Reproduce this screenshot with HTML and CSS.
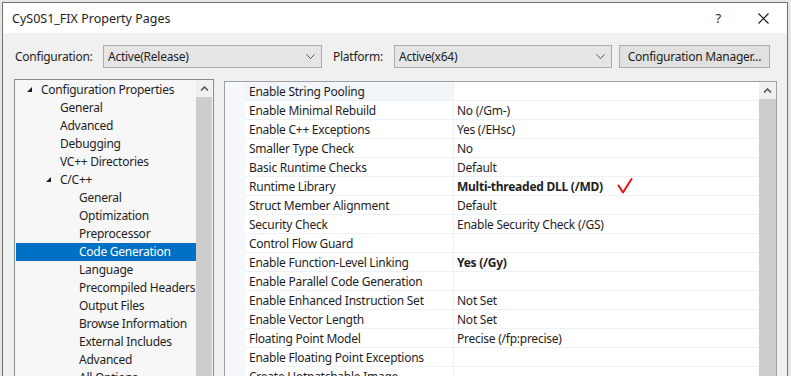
FILE: index.html
```html
<!DOCTYPE html>
<html lang="en">
<head>
    <meta charset="UTF-8">
    <title>CyS0S1_FIX Property Pages</title>
    <link rel="stylesheet" href="styles.css">
</head>
<body>
    <div class="window">
        <!-- Title bar -->
        <div class="titlebar">
            <span class="title">CyS0S1_FIX Property Pages</span>
            <span class="help">?</span>
            <svg class="close" width="11" height="11" viewBox="0 0 11 11"><path d="M0.5 0.5L10.5 10.5M10.5 0.5L0.5 10.5" stroke="#111" stroke-width="1.1" fill="none"/></svg>
        </div>

        <div class="content">
            <!-- Configuration / platform selectors -->
            <div class="toolbar">
                <label class="lbl-config">Configuration:</label>
                <div class="combo combo-config">
                    <span>Active(Release)</span>
                    <svg width="9" height="5" viewBox="0 0 9 5"><path d="M0.5 0.5L4.5 4.5L8.5 0.5" stroke="#555" fill="none"/></svg>
                </div>
                <label class="lbl-platform">Platform:</label>
                <div class="combo combo-platform">
                    <span>Active(x64)</span>
                    <svg width="9" height="5" viewBox="0 0 9 5"><path d="M0.5 0.5L4.5 4.5L8.5 0.5" stroke="#555" fill="none"/></svg>
                </div>
                <button class="btn">Configuration Manager...</button>
            </div>

            <div class="panes">
                <!-- Left: tree -->
                <div class="tree">
                    <div class="tree-list">
                        <div class="node lvl0"><i class="tri"></i>Configuration Properties</div>
                        <div class="node lvl1">General</div>
                        <div class="node lvl1">Advanced</div>
                        <div class="node lvl1">Debugging</div>
                        <div class="node lvl1">VC++ Directories</div>
                        <div class="node lvl1 open"><i class="tri"></i>C/C++</div>
                        <div class="node lvl2">General</div>
                        <div class="node lvl2">Optimization</div>
                        <div class="node lvl2">Preprocessor</div>
                        <div class="node lvl2 selected">Code Generation</div>
                        <div class="node lvl2">Language</div>
                        <div class="node lvl2">Precompiled Headers</div>
                        <div class="node lvl2">Output Files</div>
                        <div class="node lvl2">Browse Information</div>
                        <div class="node lvl2">External Includes</div>
                        <div class="node lvl2">Advanced</div>
                        <div class="node lvl2">All Options</div>
                    </div>
                    <div class="vscroll">
                        <div class="arrow"><svg width="9" height="5" viewBox="0 0 9 5"><path d="M1 4.5L4.5 1L8 4.5" stroke="#555" stroke-width="1.6" fill="none"/></svg></div>
                        <div class="thumb"></div>
                    </div>
                </div>

                <!-- Right: property grid -->
                <div class="grid">
                    <div class="gutter"></div>
                    <div class="rows">
                        <div class="row current"><div class="name">Enable String Pooling</div><div class="value"></div></div>
                        <div class="row"><div class="name">Enable Minimal Rebuild</div><div class="value">No (/Gm-)</div></div>
                        <div class="row"><div class="name">Enable C++ Exceptions</div><div class="value">Yes (/EHsc)</div></div>
                        <div class="row"><div class="name">Smaller Type Check</div><div class="value">No</div></div>
                        <div class="row"><div class="name">Basic Runtime Checks</div><div class="value">Default</div></div>
                        <div class="row"><div class="name">Runtime Library</div><div class="value"><b>Multi-threaded DLL (/MD)</b><svg class="check" width="16" height="16" viewBox="0 0 16 16"><path d="M1.5 7.5L6 14.5L14.5 1" stroke="#ee1111" stroke-width="2" fill="none" stroke-linecap="round" stroke-linejoin="round"/></svg></div></div>
                        <div class="row"><div class="name">Struct Member Alignment</div><div class="value">Default</div></div>
                        <div class="row"><div class="name">Security Check</div><div class="value">Enable Security Check (/GS)</div></div>
                        <div class="row"><div class="name">Control Flow Guard</div><div class="value"></div></div>
                        <div class="row"><div class="name">Enable Function-Level Linking</div><div class="value"><b>Yes (/Gy)</b></div></div>
                        <div class="row"><div class="name">Enable Parallel Code Generation</div><div class="value"></div></div>
                        <div class="row"><div class="name">Enable Enhanced Instruction Set</div><div class="value">Not Set</div></div>
                        <div class="row"><div class="name">Enable Vector Length</div><div class="value">Not Set</div></div>
                        <div class="row"><div class="name">Floating Point Model</div><div class="value">Precise (/fp:precise)</div></div>
                        <div class="row"><div class="name">Enable Floating Point Exceptions</div><div class="value"></div></div>
                        <div class="row"><div class="name">Create Hotpatchable Image</div><div class="value"></div></div>
                    </div>
                    <div class="vscroll">
                        <div class="arrow"><svg width="9" height="5" viewBox="0 0 9 5"><path d="M1 4.5L4.5 1L8 4.5" stroke="#555" stroke-width="1.6" fill="none"/></svg></div>
                        <div class="thumb"></div>
                    </div>
                </div>
            </div>
        </div>
    </div>
</body>
</html>
```

FILE: styles.css
```css
body {
    margin: 0;
    padding: 2px 0 0 2px;
    background-color: #e6e6e6;
    font-family: 'Noto Sans', 'Open Sans', sans-serif;
    font-size: 12px;
    letter-spacing: -0.25px;
    color: #1e1e1e;
    height: 376px;
    overflow: hidden;
    box-sizing: border-box;
}
.window {
    width: 786px;
    height: 400px;
    border: 1px solid #707070;
    box-sizing: border-box;
    background-color: #f0f0f0;
    display: flex;
    flex-direction: column;
}
.titlebar {
    height: 30px;
    background: #fff;
    display: flex;
    align-items: center;
    padding-left: 9px;
    flex-shrink: 0;
}
.title {
    font-size: 12.5px;
    letter-spacing: 0;
    flex: 1;
}
.help {
    font-size: 13px;
    margin-right: 37px;
}
.close {
    margin-right: 18px;
}
.content {
    padding: 11px 0 0 11px;
}
.toolbar {
    display: flex;
    align-items: center;
    height: 24px;
}
.lbl-config {
    width: 89px;
    padding-left: 1px;
    box-sizing: border-box;
}
.combo {
    height: 23px;
    box-sizing: border-box;
    border: 1px solid #adadad;
    background: #e5e5e5;
    display: flex;
    align-items: center;
    justify-content: space-between;
    padding: 0 6px 0 4px;
}
.combo-config {
    width: 219px;
}
.lbl-platform {
    margin-left: 11px;
    width: 61px;
}
.combo-platform {
    width: 218px;
}
.btn {
    margin-left: 7px;
    height: 23px;
    width: 151px;
    border: 1px solid #adadad;
    background: #e1e1e1;
    font-family: inherit;
    font-size: 12px;
    letter-spacing: -0.25px;
    color: #1e1e1e;
    padding: 0;
}
.panes {
    display: flex;
    margin-top: 11px;
}
.tree {
    width: 200px;
    height: 320px;
    border: 1px solid #828790;
    box-sizing: border-box;
    background: #f7f7f7;
    display: flex;
    padding-right: 1px;
}
.tree-list {
    flex: 1;
    padding: 1px 0 0 1px;
}
.node {
    height: 18px;
    line-height: 18px;
    white-space: nowrap;
    position: relative;
}
.lvl0 { padding-left: 25px; }
.lvl1 { padding-left: 44px; }
.lvl2 { padding-left: 63px; }
.node.selected {
    background: #0070c4;
    color: #fff;
}
.tri {
    position: absolute;
    top: 6px;
    width: 0;
    height: 0;
    border-left: 5px solid transparent;
    border-bottom: 5px solid #1e1e1e;
}
.lvl0 .tri { left: 11px; }
.lvl1 .tri { left: 30px; }
.vscroll {
    width: 16px;
    display: flex;
    flex-direction: column;
    flex-shrink: 0;
}
.arrow {
    height: 17px;
    display: flex;
    align-items: center;
    justify-content: center;
    background: #f0f0f0;
}
.thumb {
    flex: 1;
    background: #cdcdcd;
}
.grid {
    margin-left: 10px;
    width: 553px;
    height: 320px;
    margin-top: 2px;
    border: 1px solid #a0a0a0;
    box-sizing: border-box;
    background: #fff;
    display: flex;
}
.grid .vscroll {
    width: 17px;
}
.gutter {
    width: 20px;
    background: #f5f8fc;
}
.rows {
    flex: 1;
}
.row {
    display: flex;
    height: 19px;
    border-bottom: 1px solid #eef2f7;
    box-sizing: border-box;
}
.name {
    width: 204px;
    padding-left: 4px;
    line-height: 19px;
    border-right: 1px solid #eef2f7;
    white-space: nowrap;
}
.value {
    flex: 1;
    padding-left: 3px;
    line-height: 19px;
    white-space: nowrap;
    display: flex;
    align-items: center;
}
.row.current .name {
    background: #f2f5f9;
}
.check {
    margin-left: 14px;
}
```
